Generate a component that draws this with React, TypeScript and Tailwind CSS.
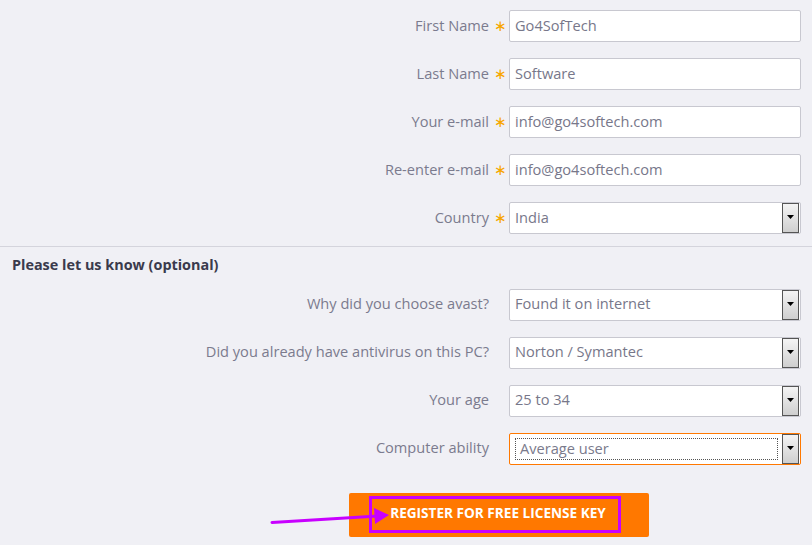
import React from 'react';

const font = { fontFamily: '"Open Sans", "Liberation Sans", sans-serif' };

function Arrow() {
  return (
    <div className="flex w-[17px] h-[30px] flex-col items-center border border-[#555] bg-gradient-to-b from-[#f4f4f4] to-[#cfcfcf]">
      <svg width="9" height="14" viewBox="0 0 9 14" className="mt-[8px]">
        <path d="M1 3 L8 3 L4.5 7 Z" fill="#000" />
      </svg>
    </div>
  );
}

function Field({ label, value, star, select, focus }: { label: string; value: string; star?: boolean; select?: boolean; focus?: boolean }) {
  return (
    <div className="grid grid-cols-[489px_20px_292px] items-center h-8">
      <div className="pb-[1px] text-right text-[14.6px] text-[#7b7b8e]">{label}</div>
      <div className="pl-[5px] pb-[2px] text-[#f7a600] text-[15px] leading-none">{star ? '∗' : ''}</div>
      <div
        className={
          'flex h-8 items-center justify-between bg-white rounded-[2px] border ' +
          (focus ? 'border-[#ff7800]' : 'border-[#c8c8d0]')
        }
      >
        {focus ? (
          <div className="ml-[5px] flex h-[22px] flex-1 items-center border border-dotted border-[#555] pl-[4px] text-[14.6px] text-[#7a7a8c]">
            {value}
          </div>
        ) : (
          <div className="pb-[1px] pl-[5px] text-[14.6px] text-[#77778a]">{value}</div>
        )}
        {select && (
          <div className="ml-[4px] mr-[1px]">
            <Arrow />
          </div>
        )}
      </div>
    </div>
  );
}

export default function App() {
  return (
    <div className="relative min-h-screen bg-[#f0f0f5]" style={font}>
      {/* Required fields */}
      <div className="flex flex-col gap-4 pt-[10px]">
        <Field label="First Name" value="Go4SofTech" star />
        <Field label="Last Name" value="Software" star />
        <Field label="Your e-mail" value="info@go4softech.com" star />
        <Field label="Re-enter e-mail" value="info@go4softech.com" star />
        <Field label="Country" value="India" star select />
      </div>

      <div className="mt-3 border-t border-[#d4d4dc]" />

      <h3 className="pl-3 pt-[7px] pb-[13px] text-[14.4px] font-bold text-[#3a3a4c]">Please let us know (optional)</h3>

      {/* Optional fields */}
      <div className="flex flex-col gap-4">
        <Field label="Why did you choose avast?" value="Found it on internet" select />
        <Field label="Did you already have antivirus on this PC?" value="Norton / Symantec" select />
        <Field label="Your age" value="25 to 34" select />
        <Field label="Computer ability" value="Average user" select focus />
      </div>

      <div className="mt-7 pl-[349px]">
        <button className="flex h-11 w-[300px] items-start rounded-[2px] bg-[#ff7800] pl-5 pt-[3px]">
          <span className="flex h-[37px] w-[252px] items-center justify-center border-[3px] border-[#c800ff] pb-[1px] pl-[6px] text-[13.6px] font-bold text-white">
            REGISTER FOR FREE LICENSE KEY
          </span>
        </button>
      </div>

      {/* annotation arrow */}
      <svg className="absolute left-[268px] top-[505px]" width="125" height="25" viewBox="0 0 125 25">
        <line x1="4" y1="17.5" x2="110" y2="11" stroke="#c800ff" strokeWidth="3" strokeLinecap="round" />
        <path d="M106 3 L121 10 L107 19 Z" fill="#c800ff" />
      </svg>
    </div>
  );
}
